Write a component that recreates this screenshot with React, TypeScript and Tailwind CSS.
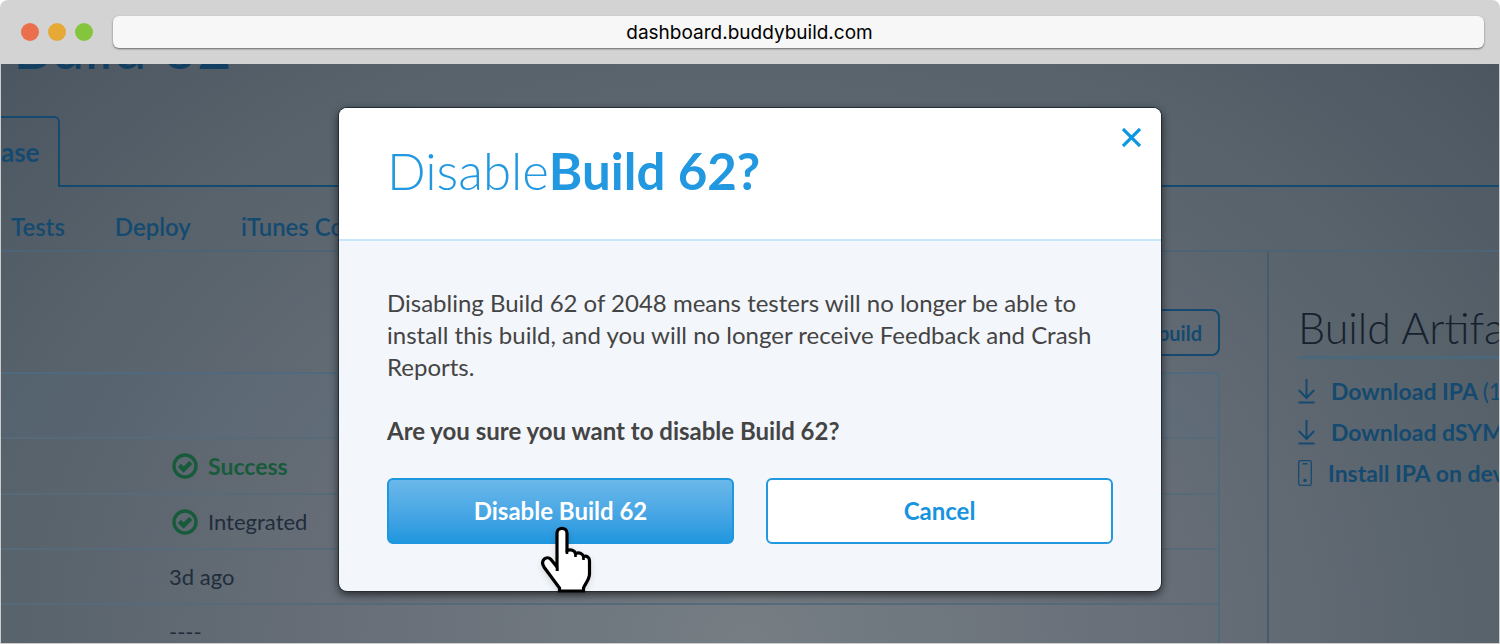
import type { ReactNode } from 'react';

function WindowDots() {
  return (
    <div className="flex gap-[9px]">
      <span className="size-[18px] rounded-full bg-[#eb6f4c]" />
      <span className="size-[18px] rounded-full bg-[#e6a935]" />
      <span className="size-[18px] rounded-full bg-[#85c53d]" />
    </div>
  );
}

function CheckIcon() {
  return (
    <svg viewBox="0 0 26 26" className="size-[26px] shrink-0" fill="none" aria-hidden="true">
      <circle cx="13" cy="13" r="11" stroke="#175b3b" strokeWidth="3.4" />
      <path d="M7.4 12.4l4.200 4.200 7.200-7.200" stroke="#175b3b" strokeWidth="4.4" />
    </svg>
  );
}

function DownloadIcon() {
  return (
    <svg viewBox="0 0 17 26" className="h-[26px] w-[17px] shrink-0" fill="none" stroke="#154a70" strokeWidth="2" aria-hidden="true">
      <path d="M8.5 1v19M0.8 12l7.7 8 7.7-8M0.5 24.5h16" />
    </svg>
  );
}

function PhoneIcon() {
  return (
    <svg viewBox="0 0 14 26" className="h-[26px] w-[14px] shrink-0" fill="none" stroke="#154a70" aria-hidden="true">
      <rect x="0.7" y="0.7" width="12.6" height="24.6" rx="1.6" strokeWidth="1.3" />
      <path d="M4.5 3.8h5" strokeWidth="1.5" />
      <circle cx="7" cy="20.5" r="1.8" fill="#154a70" stroke="none" />
    </svg>
  );
}

function PointerHand() {
  return (
    <svg
      viewBox="0 0 52 68"
      className="pointer-events-none absolute top-[46px] left-1/2 -ml-[21px] h-[68px] w-[52px] drop-shadow-md"
      aria-hidden="true"
    >
      <path
        d="M19.500 65 L19.500 62 L4.300 41.500 C-0.500 34.500 6.500 29 11 33.500 L17 41 L17 7 C17 0.800 27 0.800 27 7 L27 24.500 C31 23.200 34.500 24.200 35.500 27.500 C39 26 42.500 27.500 43.500 30.500 C47 29.500 49.500 31.500 49.500 35 L49.500 48 C49.500 53.500 45 58 43.500 62 L43.500 65 Z"
        fill="#fff"
        stroke="#000"
        strokeWidth="3.200"
      />
      <path d="M17 41v4M27 24v4M35.500 27v4M43.500 30v4" stroke="#000" strokeWidth="2.600" />
    </svg>
  );
}

function Row({ children }: { children?: ReactNode }) {
  return (
    <tr className="h-[55px] border-t-2 border-[#566a79]">
      <td className="w-[168px]" />
      <td>
        <div className="flex items-center gap-3">{children}</div>
      </td>
    </tr>
  );
}

function ArtifactLink({ icon, children }: { icon: ReactNode; children: ReactNode }) {
  return (
    <li className="h-[41px]">
      <a href="#artifact" className="flex h-full items-center gap-4 text-[23px] font-bold text-[#154a70]">
        {icon}
        <span>{children}</span>
      </a>
    </li>
  );
}

function BuildPage() {
  return (
    <div className="flex h-full flex-col text-[22px] leading-8 whitespace-nowrap text-[#154a70]">
      <div className="h-[52px]">
        <h1 className="-mt-[50px] pl-3 text-[60px] leading-[64px] text-[#123f62]">Build 62</h1>
      </div>
      <div className="flex h-[71px] shrink-0">
        <a
          href="#release"
          className="flex w-[59px] items-center rounded-tr-md border-t-2 border-r-2 border-[#154a70] pb-0.5 text-[26px] font-bold"
        >
          ase
        </a>
        <div className="flex-1 border-b-2 border-[#154a70]" />
      </div>
      <nav className="flex h-[65px] shrink-0 items-center gap-[50px] border-b-2 border-[#4c6476] pt-4 pl-2.5 text-2xl font-semibold">
        <a href="#tests">Tests</a>
        <a href="#deploy">Deploy</a>
        <a href="#itunes">iTunes Connect</a>
      </nav>
      <div className="flex min-h-0 flex-1">
        <main className="min-w-0 flex-1 pt-[57px] pr-[47px]">
          <div className="flex justify-end">
            <button
              type="button"
              className="h-[47px] rounded-lg border-2 border-[#154a70] px-4 text-xl font-bold"
            >
              Rebuild
            </button>
          </div>
          <div className="mt-4 overflow-hidden rounded-tr-md border-t-2 border-r-2 border-[#4f6a7c] text-[#202d3b]">
            <table className="w-full border-collapse">
              <tbody>
                <tr className="h-16 bg-[#4f7896]/10">
                  <td colSpan={2} />
                </tr>
                <Row>
                  <span className="flex h-[54px] items-center gap-2.5 pl-[3px] text-[23px] font-bold text-[#175b3b]">
                    <CheckIcon /> Success
                  </span>
                </Row>
                <Row>
                  <span className="flex items-center gap-2.5 pl-[3px]">
                    <CheckIcon /> Integrated
                  </span>
                </Row>
                <Row>3d ago</Row>
                <Row>----</Row>
              </tbody>
            </table>
          </div>
        </main>
        <aside className="w-[232px] shrink-0 border-l-2 border-[#485b6c] pt-12 pl-[29px]">
          <h2 className="border-b-3 border-[#4a677c] pt-0.5 pb-0.5 text-[43px] leading-[52px] font-light text-[#16212e]">
            Build Artifacts
          </h2>
          <ul className="pt-[11px]">
            <ArtifactLink icon={<DownloadIcon />}>
              Download IPA <span className="font-normal">(12 MB)</span>
            </ArtifactLink>
            <ArtifactLink icon={<DownloadIcon />}>Download dSYM</ArtifactLink>
            <ArtifactLink icon={<PhoneIcon />}>Install IPA on device</ArtifactLink>
          </ul>
        </aside>
      </div>
    </div>
  );
}

function DisableDialog() {
  return (
    <section
      role="dialog"
      aria-labelledby="dialog-title"
      className="w-full max-w-[822px] rounded-lg bg-[#f3f6fb] shadow-[0_0_0_1px_#252c33,0_3px_10px_rgba(0,0,0,0.7)]"
    >
      <header className="flex items-start justify-between rounded-t-lg border-b-2 border-[#c6e6f9] bg-white pt-[35px] pr-4 pb-10 pl-12">
        <h2 id="dialog-title" className="text-[51px] leading-14 font-light text-[#2198e0]">
          Disable<strong className="font-bold">Build 62?</strong>
        </h2>
        <button type="button" aria-label="Close" className="-mt-[19px] p-1 text-[#0c96e4]">
          <svg viewBox="0 0 20 20" className="size-[19px]" stroke="currentColor" strokeWidth="3.400" aria-hidden="true">
            <path d="M1 1l18 18M19 1L1 19" />
          </svg>
        </button>
      </header>
      <div className="px-12 pt-[46px] pb-[47px] text-2xl leading-8 text-[#444]">
        <p>
          Disabling Build 62 of 2048 means testers will no longer be able to install this build, and you will no
          longer receive Feedback and Crash Reports.
        </p>
        <p className="mt-8 font-bold">Are you sure you want to disable Build 62?</p>
        <div className="mt-[31px] flex gap-8">
          <button
            type="button"
            className="relative h-[66px] flex-1 rounded-md border-2 border-[#1f97df] bg-linear-to-b from-[#6ab8ea] to-[#1f97df] font-bold text-white"
          >
            Disable Build 62
            <PointerHand />
          </button>
          <button
            type="button"
            className="h-[66px] flex-1 rounded-md border-2 border-[#2198e0] bg-white font-bold text-[#1793df]"
          >
            Cancel
          </button>
        </div>
      </div>
    </section>
  );
}

export default function App() {
  return (
    <div className="flex h-screen flex-col bg-white font-['Lato',sans-serif]">
      <header className="flex h-16 shrink-0 items-center gap-5 rounded-t-lg bg-[#d3d3d3] pr-4 pl-[21px]">
        <WindowDots />
        <div className="flex h-8 flex-1 items-center justify-center rounded-md bg-[#f7f7f7] pt-0.5 pr-[98px] font-['Inter',sans-serif] text-[19px] text-black shadow-[0_1px_2px_rgba(0,0,0,0.5)]">
          dashboard.buddybuild.com
        </div>
      </header>
      <div className="relative min-h-0 flex-1 overflow-hidden border-x border-b border-[#ccc] bg-[radial-gradient(ellipse_1100px_900px_at_50%_100%,#767e84_0%,#666d77_40%,#57626b_70%,#49535e_100%)]">
        <BuildPage />
        <div className="absolute inset-0 flex items-start justify-center pt-11">
          <DisableDialog />
        </div>
      </div>
    </div>
  );
}
